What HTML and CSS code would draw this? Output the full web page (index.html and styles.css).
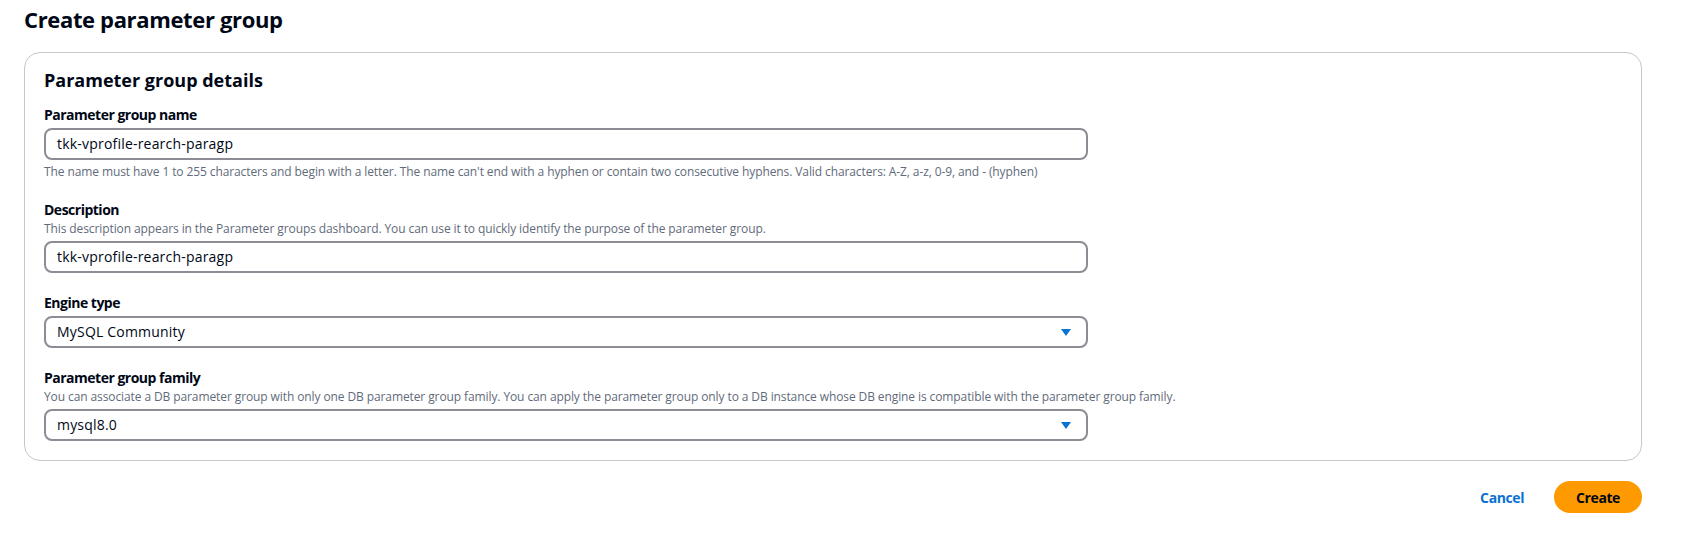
FILE: index.html
```html
<!DOCTYPE html>
<html>
<head>
<meta charset="utf-8">
<link rel="stylesheet" href="styles.css">
</head>
<body>
<div class="page">
  <h1 class="title">Create parameter group</h1>
  <section class="card">
    <h2 class="card-title">Parameter group details</h2>
    <div class="fields">
      <div class="field">
        <label class="label">Parameter group name</label>
        <div class="input">tkk-vprofile-rearch-paragp</div>
        <div class="hint hint-below">The name must have 1 to 255 characters and begin with a letter. The name can't end with a hyphen or contain two consecutive hyphens. Valid characters: A-Z, a-z, 0-9, and - (hyphen)</div>
      </div>
      <div class="field">
        <label class="label">Description</label>
        <div class="hint">This description appears in the Parameter groups dashboard. You can use it to quickly identify the purpose of the parameter group.</div>
        <div class="input">tkk-vprofile-rearch-paragp</div>
      </div>
      <div class="field">
        <label class="label">Engine type</label>
        <div class="input select">MySQL Community<span class="caret"><svg width="10" height="7" viewBox="0 0 10 7"><path d="M0 0h10L5 7z" fill="#0972d3"/></svg></span></div>
      </div>
      <div class="field">
        <label class="label">Parameter group family</label>
        <div class="hint">You can associate a DB parameter group with only one DB parameter group family. You can apply the parameter group only to a DB instance whose DB engine is compatible with the parameter group family.</div>
        <div class="input select">mysql8.0<span class="caret"><svg width="10" height="7" viewBox="0 0 10 7"><path d="M0 0h10L5 7z" fill="#0972d3"/></svg></span></div>
      </div>
    </div>
  </section>
  <div class="actions">
    <button class="btn btn-link">Cancel</button>
    <button class="btn btn-primary">Create</button>
  </div>
</div>
</body>
</html>
```
FILE: styles.css
```css
* { box-sizing: border-box; }
html, body { margin: 0; background: #fff; }
body {
  font-family: "Open Sans", "Noto Sans", sans-serif;
  color: #000716;
}
.page {
  padding: 5px 40px 0 24px;
  display: flex;
  flex-direction: column;
}
.title {
  margin: 0;
  font-size: 22px;
  line-height: 28px;
  font-weight: 700;
  letter-spacing: -0.35px;
}
.card {
  margin-top: 19px;
  border: 1px solid #c6c6cd;
  border-radius: 16px;
  padding: 16px 19px 19px;
}
.card-title {
  margin: 0;
  font-size: 18px;
  line-height: 22px;
  font-weight: 700;
}
.fields {
  margin-top: 15px;
  display: flex;
  flex-direction: column;
  gap: 21px;
}
.field {
  display: flex;
  flex-direction: column;
  width: 1044px;
}
.label {
  font-size: 14px;
  line-height: 18px;
  font-weight: 700;
  letter-spacing: -0.5px;
}
.hint {
  font-size: 12px;
  line-height: 16px;
  color: #5f6b7a;
  margin: 2px 0 4px;
  white-space: nowrap;
  letter-spacing: -0.1px;
}
.hint-below { margin: 4px 0 0; }
.input {
  margin-top: 4px;
  height: 32px;
  border: 2px solid #8c8c94;
  border-radius: 8px;
  padding: 0 11px;
  font-size: 14px;
  line-height: 28px;
  display: flex;
  align-items: center;
  justify-content: space-between;
  letter-spacing: 0.2px;
}
.hint + .input { margin-top: 0; }
.caret { display: flex; margin-right: 4px; }
.actions {
  margin-top: 20px;
  display: flex;
  justify-content: flex-end;
  gap: 8px;
}
.btn {
  font-family: inherit;
  font-size: 14px;
  font-weight: 700;
  height: 32px;
  border-radius: 20px;
  padding: 0 20px;
  border: 2px solid transparent;
  cursor: pointer;
  letter-spacing: -0.4px;
}
.btn-link { background: none; color: #0972d3; }
.btn-primary { background: #ff9900; color: #000716; border-color: #ff9900; }
```
